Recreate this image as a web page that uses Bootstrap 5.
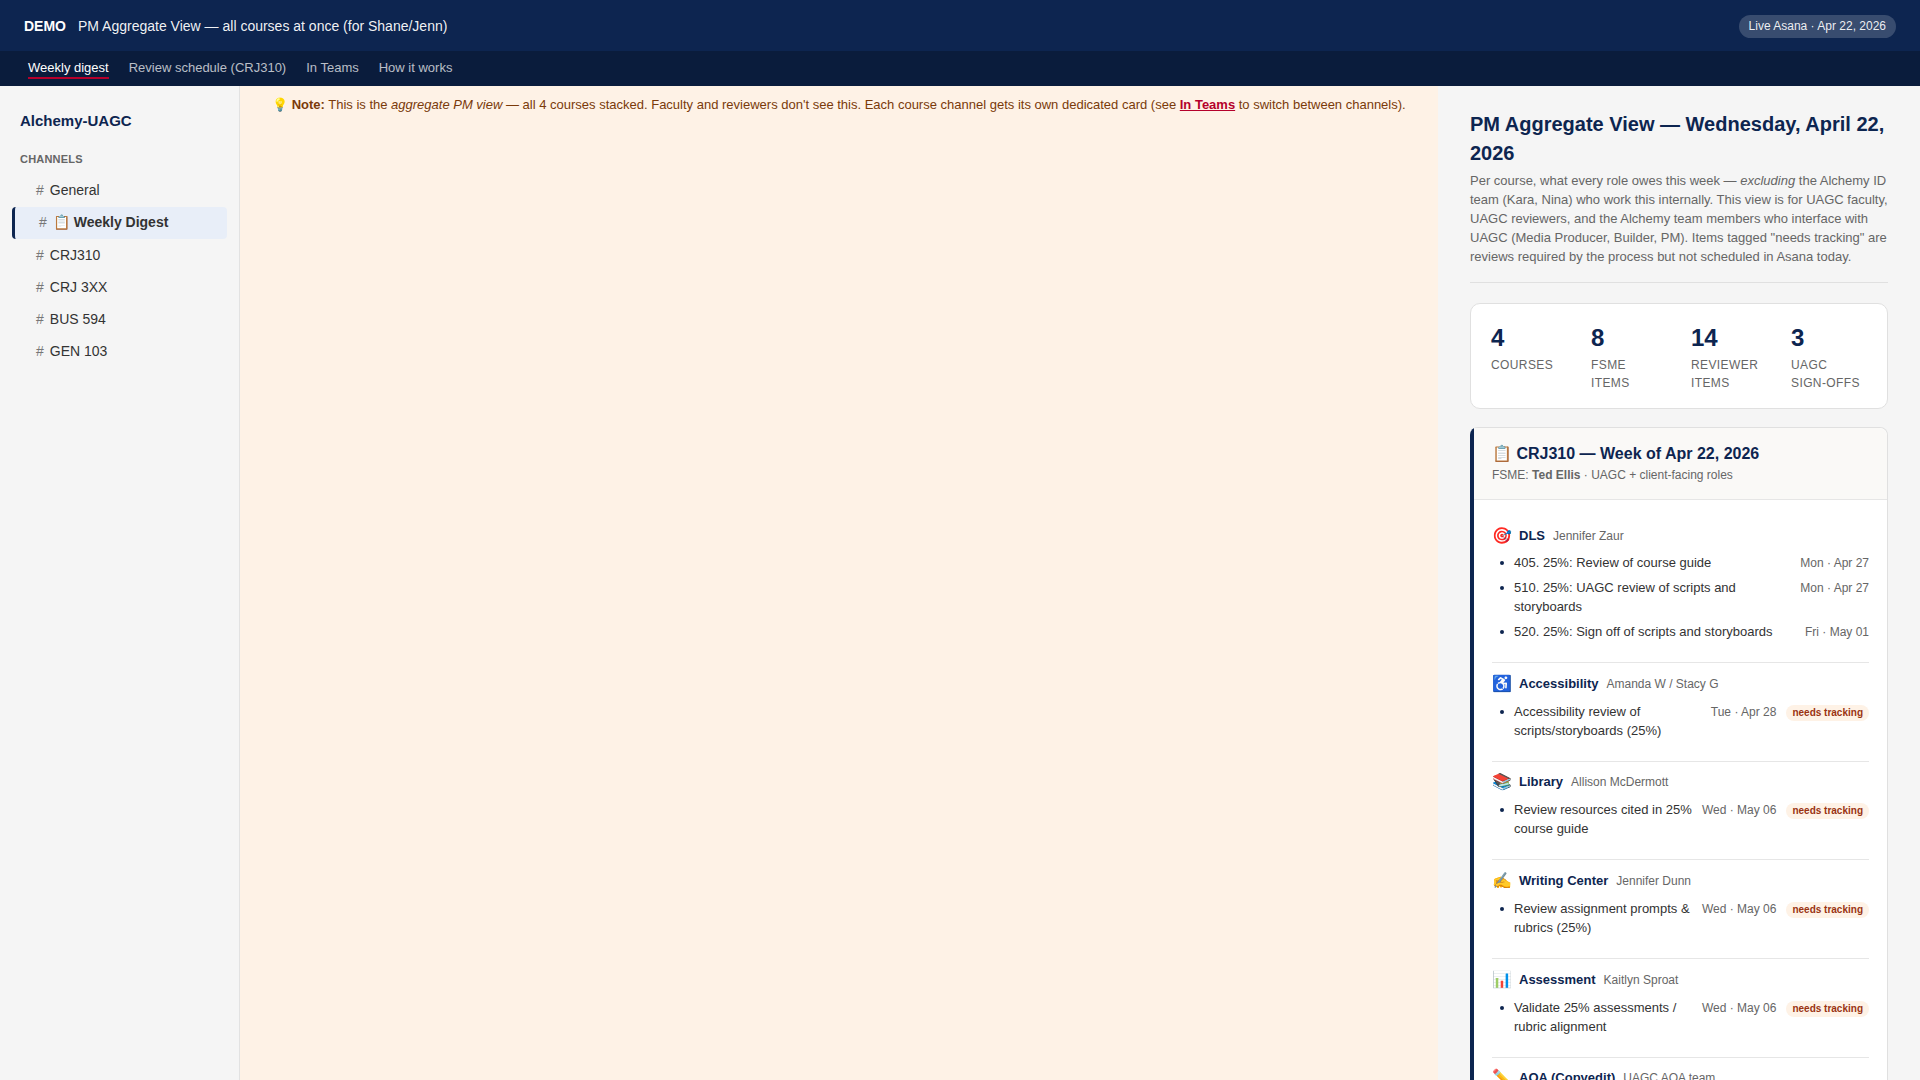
<!DOCTYPE html>
<html lang="en">
<head>
<meta charset="utf-8">
<title>PM Aggregate View</title>
<link href="https://cdn.jsdelivr.net/npm/bootstrap@5.3.0/dist/css/bootstrap.min.css" rel="stylesheet">
<style>
html,body{height:100%;}
body{font-family:"Liberation Sans",Arial,sans-serif;font-size:14px;color:#333;background:#f5f5f5;overflow:hidden;}
.app-shell{height:100vh;}
.top-bar{background:#0d2550;color:#fff;height:51px;padding:1px 24px 0;}
.top-demo{font-size:14px;font-weight:700;margin-right:12px;}
.top-title{font-size:14px;color:rgba(255,255,255,.95);}
.top-pill{background:rgba(255,255,255,.18);font-size:12px;font-weight:400;padding:4px 10px;line-height:15px;color:rgba(255,255,255,.92);}
.sub-nav{background:#0a1c3c;height:35px;padding:0 28px;gap:20px;}
.sub-link{font-size:13px;color:rgba(255,255,255,.72);text-decoration:none;line-height:19px;margin-top:7px;height:21px;border-bottom:2px solid transparent;}
.sub-link.is-on{color:#fff;border-bottom-color:#b5002b;}
.pane-row{flex:1 1 auto;min-height:0;}
.side-pane{width:240px;flex:none;background:#f5f5f5;border-right:1px solid #e2e2e2;padding:24px 12px 0 12px;}
.side-brand{font-size:15px;font-weight:700;color:#0d2550;padding-left:8px;line-height:22px;margin-bottom:19px;}
.side-label{font-size:11px;font-weight:700;color:#666;padding-left:8px;letter-spacing:.2px;line-height:16px;margin-bottom:7.6px;}
.chan{display:flex;gap:6px;padding:0 0 0 24px;height:32.2px;align-items:center;font-size:14px;color:#333;border-radius:4px;}
.chan-hash{color:#777;}
.chan.is-on{background:#e8eef8;border-left:3px solid #0d2550;font-weight:700;}
.chan.is-on .chan-hash{font-weight:400;}
.center-pane{flex:1 1 auto;background:#fef2e6;padding:9px 32px;font-size:13px;color:#7a3a0a;line-height:19px;}
.center-pane a{color:#b5002b;font-weight:700;}
.right-pane{width:482px;flex:none;background:#f5f5f5;padding:24px 32px;overflow:hidden;}
.page-head{border-bottom:1px solid #e0e0e0;padding-bottom:16px;margin-bottom:20px;}
.page-title{font-size:20px;font-weight:700;color:#0d2550;line-height:29px;margin:0 0 3px;}
.page-sub{font-size:13px;line-height:19px;color:#666;margin:0;}
.stat-box{border:1px solid #e0e0e0;border-radius:10px;background:#fff;padding:16px 20px;display:grid;grid-template-columns:repeat(4,1fr);gap:24px;margin-bottom:18px;}
.stat-num{font-size:24px;font-weight:700;line-height:36px;color:#0d2550;}
.stat-cap{font-size:12px;line-height:18px;letter-spacing:.4px;text-transform:uppercase;color:#666;}
.course-card{border:1px solid #e0e0e0;border-left:4px solid #0d2550;border-radius:8px;background:#fff;}
.course-top{background:#faf9f7;border-bottom:1px solid #e6e6e6;padding:14px 18px 15px;border-radius:0 8px 0 0;}
.course-title{font-size:16px;font-weight:700;color:#0d2550;line-height:24px;margin:0;}
.course-sub{font-size:12px;color:#666;line-height:18px;}
.course-body{padding:25px 18px 0;}
.role-block{padding-bottom:21px;margin-bottom:9.7px;border-bottom:1px solid #e6e6e6;}
.role-head{display:flex;align-items:center;gap:8px;line-height:22px;margin-bottom:7px;height:22px;}
.role-block:first-child .role-head{margin-bottom:6px;}
.role-ico{font-size:16px;width:19px;}
.role-name{font-size:13px;font-weight:700;color:#0d2550;}
.role-who{font-size:12px;color:#666;}
.task-list{padding-left:0;margin:0;list-style:none;}
.task{display:flex;gap:10px;font-size:13px;line-height:19px;padding-left:22px;margin-bottom:6px;position:relative;color:#333;}
.task::before{content:"";position:absolute;left:8px;top:8px;width:4px;height:4px;border-radius:50%;background:#0d2550;}
.task:last-child{margin-bottom:0;}
.task-text{flex:1 1 auto;}
.task-when{font-size:12px;line-height:18px;color:#666;white-space:nowrap;padding-top:1px;}
.track-chip{flex:none;align-self:flex-start;background:#fef2e6;color:#9a3412;font-size:10px;font-weight:700;line-height:12px;padding:2px 6px;border-radius:8px;margin-top:3px;white-space:nowrap;}
</style>
</head>
<body>
<div class="app-shell d-flex flex-column">
  <div class="top-bar d-flex align-items-center justify-content-between flex-shrink-0">
    <div class="d-flex align-items-center"><span class="top-demo">DEMO</span><span class="top-title">PM Aggregate View — all courses at once (for Shane/Jenn)</span></div>
    <span class="badge rounded-pill top-pill">Live Asana · Apr 22, 2026</span>
  </div>
  <nav class="sub-nav d-flex flex-shrink-0">
    <a class="sub-link is-on" href="#">Weekly digest</a>
    <a class="sub-link" href="#">Review schedule (CRJ310)</a>
    <a class="sub-link" href="#">In Teams</a>
    <a class="sub-link" href="#">How it works</a>
  </nav>
  <div class="pane-row d-flex">
    <aside class="side-pane">
      <div class="side-brand">Alchemy-UAGC</div>
      <div class="side-label">CHANNELS</div>
      <div class="chan"><span class="chan-hash">#</span><span>General</span></div>
      <div class="chan is-on"><span class="chan-hash">#</span><span>📋 Weekly Digest</span></div>
      <div class="chan"><span class="chan-hash">#</span><span>CRJ310</span></div>
      <div class="chan"><span class="chan-hash">#</span><span>CRJ 3XX</span></div>
      <div class="chan"><span class="chan-hash">#</span><span>BUS 594</span></div>
      <div class="chan"><span class="chan-hash">#</span><span>GEN 103</span></div>
    </aside>
    <main class="center-pane">💡 <strong>Note:</strong> This is the <em>aggregate PM view</em> — all 4 courses stacked. Faculty and reviewers don't see this. Each course channel gets its own dedicated card (see <a href="#">In Teams</a> to switch between channels).</main>
    <section class="right-pane">
      <div class="page-head">
        <h1 class="page-title">PM Aggregate View — Wednesday, April 22, 2026</h1>
        <p class="page-sub">Per course, what every role owes this week — <em>excluding</em> the Alchemy ID team (Kara, Nina) who work this internally. This view is for UAGC faculty, UAGC reviewers, and the Alchemy team members who interface with UAGC (Media Producer, Builder, PM). Items tagged "needs tracking" are reviews required by the process but not scheduled in Asana today.</p>
      </div>
      <div class="stat-box">
        <div><div class="stat-num">4</div><div class="stat-cap">Courses</div></div>
        <div><div class="stat-num">8</div><div class="stat-cap">FSME items</div></div>
        <div><div class="stat-num">14</div><div class="stat-cap">Reviewer items</div></div>
        <div><div class="stat-num">3</div><div class="stat-cap">UAGC<br>sign-offs</div></div>
      </div>
      <div class="course-card">
        <div class="course-top">
          <h2 class="course-title">📋 CRJ310 — Week of Apr 22, 2026</h2>
          <div class="course-sub">FSME: <strong>Ted Ellis</strong> · UAGC + client-facing roles</div>
        </div>
        <div class="course-body">
          <div class="role-block">
            <div class="role-head"><span class="role-ico">🎯</span><span class="role-name">DLS</span><span class="role-who">Jennifer Zaur</span></div>
            <ul class="task-list">
              <li class="task"><span class="task-text">405. 25%: Review of course guide</span><span class="task-when">Mon · Apr 27</span></li>
              <li class="task"><span class="task-text">510. 25%: UAGC review of scripts and storyboards</span><span class="task-when">Mon · Apr 27</span></li>
              <li class="task"><span class="task-text">520. 25%: Sign off of scripts and storyboards</span><span class="task-when">Fri · May 01</span></li>
            </ul>
          </div>
          <div class="role-block">
            <div class="role-head"><span class="role-ico">♿</span><span class="role-name">Accessibility</span><span class="role-who">Amanda W / Stacy G</span></div>
            <ul class="task-list"><li class="task"><span class="task-text">Accessibility review of scripts/storyboards (25%)</span><span class="task-when">Tue · Apr 28</span><span class="track-chip">needs tracking</span></li></ul>
          </div>
          <div class="role-block">
            <div class="role-head"><span class="role-ico">📚</span><span class="role-name">Library</span><span class="role-who">Allison McDermott</span></div>
            <ul class="task-list"><li class="task"><span class="task-text">Review resources cited in 25% course guide</span><span class="task-when">Wed · May 06</span><span class="track-chip">needs tracking</span></li></ul>
          </div>
          <div class="role-block">
            <div class="role-head"><span class="role-ico">✍️</span><span class="role-name">Writing Center</span><span class="role-who">Jennifer Dunn</span></div>
            <ul class="task-list"><li class="task"><span class="task-text">Review assignment prompts &amp; rubrics (25%)</span><span class="task-when">Wed · May 06</span><span class="track-chip">needs tracking</span></li></ul>
          </div>
          <div class="role-block">
            <div class="role-head"><span class="role-ico">📊</span><span class="role-name">Assessment</span><span class="role-who">Kaitlyn Sproat</span></div>
            <ul class="task-list"><li class="task"><span class="task-text">Validate 25% assessments / rubric alignment</span><span class="task-when">Wed · May 06</span><span class="track-chip">needs tracking</span></li></ul>
          </div>
          <div class="role-block">
            <div class="role-head"><span class="role-ico">✏️</span><span class="role-name">AOA (Copyedit)</span><span class="role-who">UAGC AOA team</span></div>
          </div>
        </div>
      </div>
    </section>
  </div>
</div>
<script src="https://cdn.jsdelivr.net/npm/bootstrap@5.3.0/dist/js/bootstrap.bundle.min.js"></script>
</body>
</html>
